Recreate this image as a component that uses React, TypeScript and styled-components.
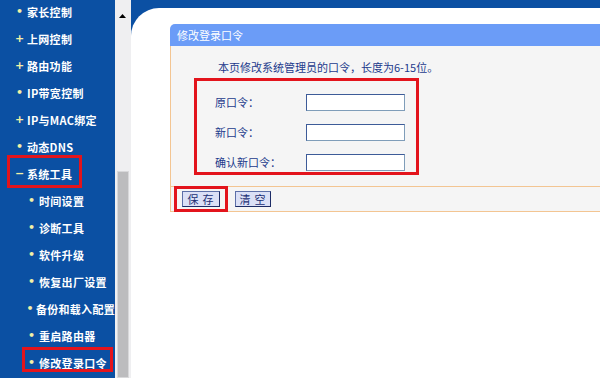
import React from "react";
import styled, { createGlobalStyle } from "styled-components";

const GlobalStyle = createGlobalStyle`
  html, body {
    margin: 0;
    padding: 0;
    background: #ffffff;
  }
  body {
    font-family: "Noto Sans CJK SC", "Noto Sans", sans-serif;
  }
`;

type MenuEntry = {
  label: string;
  mark: "dot" | "plus" | "minus";
  sub?: boolean;
  frame?: { top: number; left: number; width: number; height: number };
};

const MENU: MenuEntry[] = [
  { label: "家长控制", mark: "dot" },
  { label: "上网控制", mark: "plus" },
  { label: "路由功能", mark: "plus" },
  { label: "IP带宽控制", mark: "dot" },
  { label: "IP与MAC绑定", mark: "plus" },
  { label: "动态DNS", mark: "dot" },
  {
    label: "系统工具",
    mark: "minus",
    frame: { top: -5, left: 7, width: 75, height: 33 },
  },
  { label: "时间设置", mark: "dot", sub: true },
  { label: "诊断工具", mark: "dot", sub: true },
  { label: "软件升级", mark: "dot", sub: true },
  { label: "恢复出厂设置", mark: "dot", sub: true },
  { label: "备份和载入配置", mark: "dot", sub: true },
  { label: "重启路由器", mark: "dot", sub: true },
  {
    label: "修改登录口令",
    mark: "dot",
    sub: true,
    frame: { top: -2, left: 22, width: 91, height: 25 },
  },
];

const MARKS = { dot: "•", plus: "+", minus: "−" };

const FIELDS = ["原口令：", "新口令：", "确认新口令："];

const App = () => {
  return (
    <>
      <GlobalStyle />
      <Page>
        <Sidebar>
          <MenuList>
            {MENU.map(item => (
              <MenuItem key={item.label} $sub={item.sub}>
                <Bullet>{MARKS[item.mark]}</Bullet>
                <MenuText>{item.label}</MenuText>
                {item.frame && (
                  <RedFrame
                    style={{
                      top: item.frame.top,
                      left: item.frame.left,
                      width: item.frame.width,
                      height: item.frame.height,
                    }}
                  />
                )}
              </MenuItem>
            ))}
          </MenuList>
        </Sidebar>

        <ScrollBar>
          <ScrollArrow>
            <svg width="7" height="4" viewBox="0 0 7 4">
              <polygon points="3.5,0 7,4 0,4" fill="#000" />
            </svg>
          </ScrollArrow>
          <ScrollThumb />
        </ScrollBar>

        <Main>
          <Panel>
            <Card>
              <CardHeader>修改登录口令</CardHeader>
              <CardBody>
                <Intro>本页修改系统管理员的口令，长度为6-15位。</Intro>
                <FieldBox>
                  {FIELDS.map(label => (
                    <FieldRow key={label}>
                      <FieldLabel>{label}</FieldLabel>
                      <TextInput type="password" />
                    </FieldRow>
                  ))}
                </FieldBox>
              </CardBody>
              <ButtonRow>
                <ButtonFrame>
                  <Button>保存</Button>
                </ButtonFrame>
                <Button $narrow>清空</Button>
              </ButtonRow>
            </Card>
          </Panel>
        </Main>
      </Page>
    </>
  );
};

const Page = styled.div`
  display: flex;
  width: 600px;
  height: 378px;
  overflow: hidden;
  background: #0b50a3;
`;

const Sidebar = styled.div`
  width: 115px;
  flex-shrink: 0;
  background: #0b50a3;
  overflow: hidden;
`;

const MenuList = styled.ul`
  list-style: none;
  margin: -2px 0 0;
  padding: 0;
`;

const MenuItem = styled.li<{ $sub?: boolean }>`
  position: relative;
  display: flex;
  align-items: center;
  height: 27px;
  padding-left: ${p => (p.$sub ? 26 : 14)}px;
  white-space: nowrap;
`;

const Bullet = styled.span`
  width: 11px;
  text-align: center;
  color: #f3f1a6;
  font-family: "DejaVu Sans", sans-serif;
  font-size: 11px;
  font-weight: bold;
  margin-right: 2px;
`;

const MenuText = styled.span`
  color: #ffffff;
  font-size: 11px;
  font-weight: bold;
  letter-spacing: 0.3px;
`;

const RedFrame = styled.span`
  position: absolute;
  box-sizing: border-box;
  border: 3px solid #e3141c;
  pointer-events: none;
`;

const ScrollBar = styled.div`
  width: 16px;
  flex-shrink: 0;
  display: flex;
  flex-direction: column;
  background: #efeff1;
`;

const ScrollArrow = styled.div`
  height: 32px;
  display: flex;
  align-items: center;
  justify-content: center;
  padding-right: 1px;
`;

const ScrollThumb = styled.div`
  margin: 139px 2px 0 2px;
  flex: 1;
  background: #bcbcbe;
  border: 1px solid #d8d8da;
`;

const Main = styled.div`
  flex: 1;
  padding-top: 8px;
  background: #0b50a3;
  display: flex;
`;

const Panel = styled.div`
  flex: 1;
  background: #ffffff;
  border-top-left-radius: 28px;
  padding: 16px 0 0 39px;
  overflow: hidden;
`;

const Card = styled.div`
  width: 480px;
`;

const CardHeader = styled.div`
  height: 22px;
  line-height: 22px;
  padding-left: 7px;
  background: #6b9cf7;
  border-top-left-radius: 5px;
  color: #ffffff;
  font-size: 11px;
`;

const CardBody = styled.div`
  background: #f5f5f5;
  border-left: 1px solid #f3c592;
  border-bottom: 1px solid #f3c592;
  padding: 13px 0 11px 23px;
`;

const Intro = styled.div`
  height: 16px;
  line-height: 16px;
  margin: 0 0 3px 24px;
  color: #1c3a8c;
  font-size: 11px;
`;

const FieldBox = styled.div`
  width: 225px;
  height: 97px;
  box-sizing: border-box;
  border: 3px solid #e3141c;
  padding: 6px 0 0 18px;
`;

const FieldRow = styled.div`
  display: flex;
  align-items: center;
  height: 30px;
`;

const FieldLabel = styled.span`
  width: 91px;
  color: #1c3a8c;
  font-size: 11px;
`;

const TextInput = styled.input`
  width: 99px;
  height: 17px;
  box-sizing: border-box;
  margin: 0;
  padding: 0 2px;
  background: #ffffff;
  border: 1px solid #7f9db9;
  border-top-color: #3d5b98;
  border-left-color: #3d5b98;
  outline: none;
`;

const ButtonRow = styled.div`
  display: flex;
  align-items: center;
  gap: 7px;
  height: 24px;
  padding-left: 3px;
  background: #f5f5f5;
  border-left: 1px solid #f3c592;
  border-bottom: 1px solid #f3c592;
`;

const ButtonFrame = styled.span`
  display: flex;
  align-items: center;
  box-sizing: border-box;
  height: 26px;
  margin: -1px 0 0;
  padding: 0 5px;
  border: 3px solid #e3141c;
`;

const Button = styled.button<{ $narrow?: boolean }>`
  width: ${p => (p.$narrow ? 36 : 38)}px;
  height: 16px;
  margin: 0;
  padding: 0 0 0 3px;
  box-sizing: border-box;
  background: #dbe0f6;
  border: 1px solid #5d6fa8;
  border-right-color: #1d2c66;
  border-bottom-color: #1d2c66;
  color: #1c2f74;
  font-family: "Noto Sans CJK SC", sans-serif;
  font-size: 11px;
  line-height: 14px;
  letter-spacing: 4px;
`;

export default App;
